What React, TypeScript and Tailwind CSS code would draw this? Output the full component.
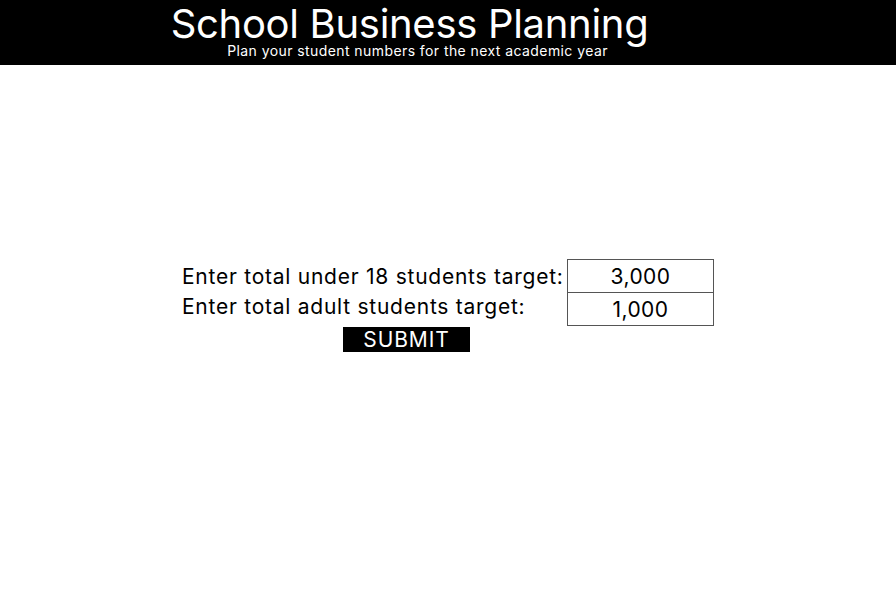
export default function App() {
  return (
    <div className="min-h-[607px] bg-white font-['Inter',sans-serif] text-black">
      <header className="flex h-[65px] flex-col items-center bg-black pr-[77px] text-white">
        <h1 className="mt-[3px] text-[40px] leading-[41px] tracking-[-0.3px]">School Business Planning</h1>
        <p className="mt-[2px] pl-[16px] text-[14px] leading-[10px] tracking-[0.42px]">
          Plan your student numbers for the next academic year
        </p>
      </header>
      <main className="flex flex-col items-center pt-[194px]">
        <div className="flex">
          <div className="flex w-[385px] flex-col text-[21px] leading-[30px] tracking-[0.75px]">
            <label className="mt-[3px]">Enter total under 18 students target:</label>
            <label>Enter total adult students target:</label>
          </div>
          <div className="flex w-[147px] flex-col">
            <input
              defaultValue="3,000"
              className="h-[34px] w-[147px] border border-[#555] text-center text-[21px] tracking-[0.4px] outline-none"
            />
            <input
              defaultValue="1,000"
              className="-mt-[1px] h-[34px] w-[147px] border border-[#555] text-center text-[21px] tracking-[0.4px] outline-none"
            />
          </div>
        </div>
        <button className="mt-[1px] mr-[83px] h-[25px] w-[127px] bg-black text-[21px] leading-[25px] tracking-[0.9px] text-white">
          SUBMIT
        </button>
      </main>
    </div>
  );
}
